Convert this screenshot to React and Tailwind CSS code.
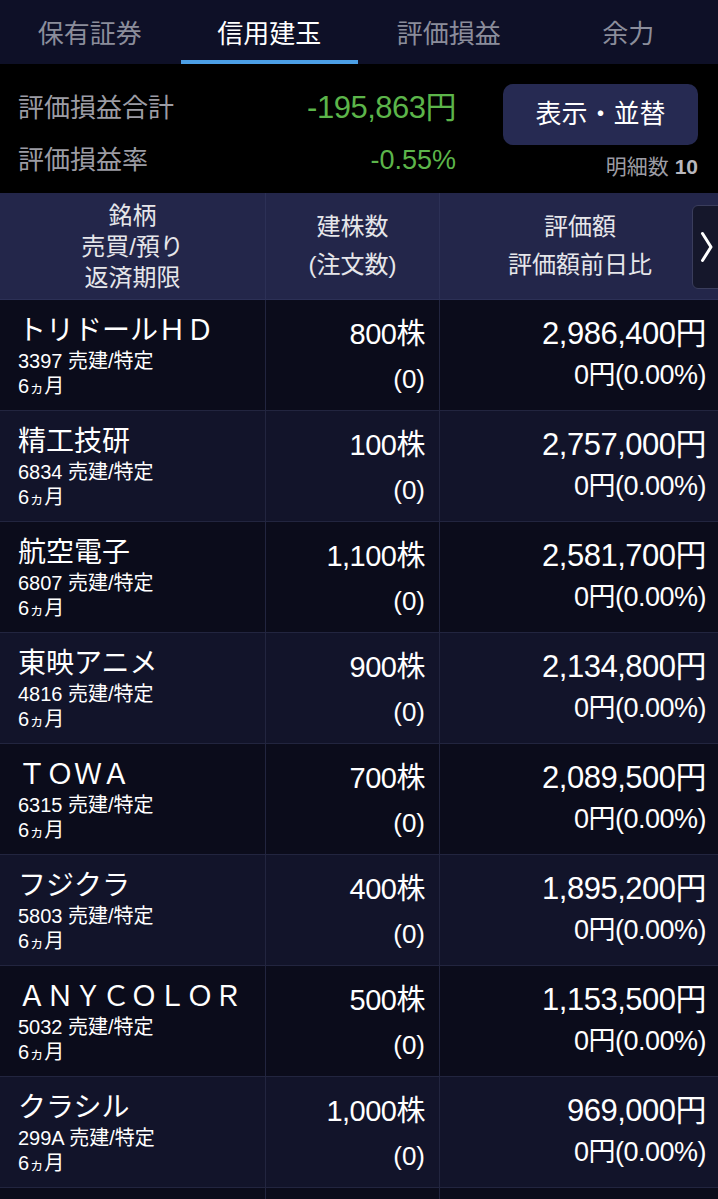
const tabs = ['保有証券', '信用建玉', '評価損益', '余力']

const rows = [
  { name: 'トリドールＨＤ', code: '3397', qty: '800株', value: '2,986,400円' },
  { name: '精工技研', code: '6834', qty: '100株', value: '2,757,000円' },
  { name: '航空電子', code: '6807', qty: '1,100株', value: '2,581,700円' },
  { name: '東映アニメ', code: '4816', qty: '900株', value: '2,134,800円' },
  { name: 'ＴＯＷＡ', code: '6315', qty: '700株', value: '2,089,500円' },
  { name: 'フジクラ', code: '5803', qty: '400株', value: '1,895,200円' },
  { name: 'ＡＮＹＣＯＬＯＲ', code: '5032', qty: '500株', value: '1,153,500円' },
  { name: 'クラシル', code: '299A', qty: '1,000株', value: '969,000円' },
]

export default function App() {
  return (
    <div
      className="w-[718px] h-[1199px] overflow-hidden bg-black text-white"
      style={{ fontFamily: '"Liberation Sans", "Noto Sans CJK JP", sans-serif' }}
    >
      {/* Tabs */}
      <div className="flex h-[64px] bg-[#0e1027]">
        {tabs.map((t, i) => (
          <div
            key={t}
            className={`flex-1 flex items-center justify-center text-[26px] relative ${
              i === 1 ? 'text-white' : 'text-[#8b8d9b]'
            }`}
          >
            <span className="mt-[4px]">{t}</span>
            {i === 1 && <div className="absolute bottom-0 left-[1px] right-[1px] h-[4px] bg-[#4b9fe6]" />}
          </div>
        ))}
      </div>

      {/* Summary */}
      <div className="h-[129px] bg-black flex pl-[18px] pr-[20px]">
        <div className="w-[438px] pt-[26px]">
          <div className="flex justify-between items-center h-[36px]">
            <span className="text-[26px] text-[#9c9ca4]">評価損益合計</span>
            <span className="text-[31px] text-[#5cb54a] tracking-[-0.5px]">-195,863円</span>
          </div>
          <div className="flex justify-between items-center h-[36px] mt-[16px]">
            <span className="text-[26px] text-[#9c9ca4]">評価損益率</span>
            <span className="text-[27px] text-[#5cb54a]">-0.55%</span>
          </div>
        </div>
        <div className="flex-1 flex flex-col items-end pt-[20px]">
          <div className="w-[195px] h-[61px] rounded-[10px] bg-[#262a52] flex items-center justify-center text-[26px]">
            表示・並替
          </div>
          <div className="mt-[6px] text-[21px] text-[#9c9ca4]">
            明細数 <span className="text-[#b8b8be] font-bold">10</span>
          </div>
        </div>
      </div>

      {/* Column headers */}
      <div className="flex h-[107px] bg-[#23264a] border-b border-[#2c3056] text-[24px] text-[#e6e6ea] leading-[31px]">
        <div className="w-[266px] border-r border-[#2c3056] flex flex-col items-center justify-center">
          <span>銘柄</span>
          <span>売買/預り</span>
          <span>返済期限</span>
        </div>
        <div className="w-[174px] border-r border-[#2c3056] flex flex-col items-center justify-center leading-[38px]">
          <span>建株数</span>
          <span>(注文数)</span>
        </div>
        <div className="flex-1 flex items-center relative">
          <div className="flex-1 flex flex-col items-center justify-center leading-[38px] pl-[2px]">
            <span>評価額</span>
            <span>評価額前日比</span>
          </div>
          <div className="absolute right-[-8px] top-[12px] w-[34px] h-[84px] rounded-[6px] bg-[#15172b] border border-[#3a3d5c] flex items-center justify-start pl-[7px]">
            <svg width="14" height="32" viewBox="0 0 14 32" fill="none">
              <path d="M2.5 2.5 L11 16 L2.5 29.5" stroke="white" strokeWidth="3" strokeLinecap="round" strokeLinejoin="round" />
            </svg>
          </div>
        </div>
      </div>

      {/* Positions */}
      {rows.map((r, i) => (
        <div
          key={r.code}
          className={`flex h-[111px] border-b border-[#22253f] ${i % 2 === 0 ? 'bg-[#0b0c1b]' : 'bg-[#12142a]'}`}
        >
          <div className="w-[266px] border-r border-[#22253f] pl-[18px] pt-[13px]">
            <div className="text-[28px] leading-[36px] whitespace-nowrap">{r.name}</div>
            <div className="text-[20px] leading-[25px]">{r.code} 売建/特定</div>
            <div className="text-[20px] leading-[25px]">6<span className="text-[15px]">ヵ</span>月</div>
          </div>
          <div className="w-[174px] border-r border-[#22253f] flex flex-col items-end pr-[14px] pt-[16px]">
            <div className="text-[29px] leading-[36px] tracking-[-0.5px]">{r.qty}</div>
            <div className="text-[26px] leading-[36px] mt-[9px]">(0)</div>
          </div>
          <div className="flex-1 flex flex-col items-end pr-[12px] pt-[16px]">
            <div className="text-[31px] leading-[36px] tracking-[-0.5px]">{r.value}</div>
            <div className="text-[27px] leading-[36px] mt-[5px] tracking-[-0.5px]">0円(0.00%)</div>
          </div>
        </div>
      ))}
      <div className="flex h-[111px] bg-[#0b0c1b]">
        <div className="w-[266px] border-r border-[#22253f]" />
        <div className="w-[174px] border-r border-[#22253f]" />
      </div>
    </div>
  )
}
